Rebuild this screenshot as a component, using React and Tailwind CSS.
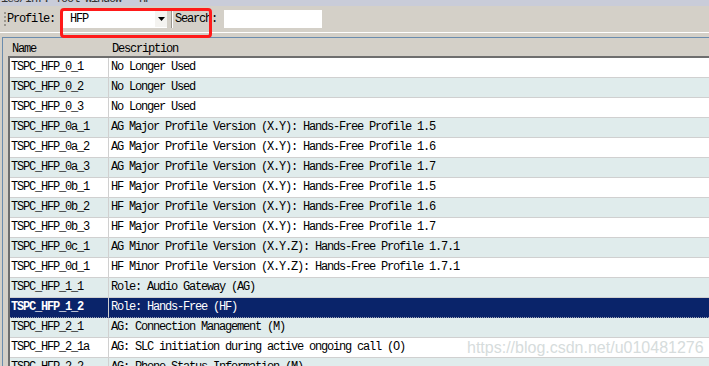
import React from "react";

const rows = [
  ["TSPC_HFP_0_1", "No Longer Used"],
  ["TSPC_HFP_0_2", "No Longer Used"],
  ["TSPC_HFP_0_3", "No Longer Used"],
  ["TSPC_HFP_0a_1", "AG Major Profile Version (X.Y): Hands-Free Profile 1.5"],
  ["TSPC_HFP_0a_2", "AG Major Profile Version (X.Y): Hands-Free Profile 1.6"],
  ["TSPC_HFP_0a_3", "AG Major Profile Version (X.Y): Hands-Free Profile 1.7"],
  ["TSPC_HFP_0b_1", "HF Major Profile Version (X.Y): Hands-Free Profile 1.5"],
  ["TSPC_HFP_0b_2", "HF Major Profile Version (X.Y): Hands-Free Profile 1.6"],
  ["TSPC_HFP_0b_3", "HF Major Profile Version (X.Y): Hands-Free Profile 1.7"],
  ["TSPC_HFP_0c_1", "AG Minor Profile Version (X.Y.Z): Hands-Free Profile 1.7.1"],
  ["TSPC_HFP_0d_1", "HF Minor Profile Version (X.Y.Z): Hands-Free Profile 1.7.1"],
  ["TSPC_HFP_1_1", "Role: Audio Gateway (AG)"],
  ["TSPC_HFP_1_2", "Role: Hands-Free (HF)"],
  ["TSPC_HFP_2_1", "AG: Connection Management (M)"],
  ["TSPC_HFP_2_1a", "AG: SLC initiation during active ongoing call (O)"],
  ["TSPC_HFP_2_2", "AG: Phone Status Information (M)"],
];

const SELECTED = 12;

export default function App() {
  return (
    <div className="relative w-[709px] h-[366px] overflow-hidden bg-[#d4d0c8] text-black font-['Liberation_Mono',monospace] text-[12px] tracking-[-1.2px]">
      {/* title bar, mostly scrolled off */}
      <div className="h-[6px] bg-[#c9ccd9] overflow-hidden">
        <div className="-mt-[7px] pl-[1px] leading-[12px] text-[#333]">ies/Inf. Tool window - HF</div>
      </div>

      {/* toolbar */}
      <div className="h-[26px] flex items-center">
        <div className="ml-[4px] w-[2px] h-[14px] border-l-2 border-dotted border-[#9a978f]" />
        <span className="ml-[1px] w-[56px]">Profile:</span>
        <div className="w-[104px] h-[18px] bg-white flex items-center">
          <span className="pl-[7px] flex-1">HFP</span>
          <div className="w-[12px] h-[16px] flex items-center justify-center bg-[#f4f3f0]">
            <svg width="7" height="4" viewBox="0 0 7 4">
              <path d="M0 0H7L3.5 4Z" fill="#000" />
            </svg>
          </div>
        </div>
        <div className="ml-[4px] w-[2px] h-[18px] border-l border-r border-l-[#9a978f] border-r-white" />
        <span className="ml-[2px] w-[49px]">Search:</span>
        <div className="w-[98px] h-[18px] bg-white" />
      </div>

      <div className="h-px bg-white" />
      <div className="h-[4px]" />

      {/* list panel */}
      <div className="ml-[2px] border-t border-l border-[#6b8cad]">
        <div className="h-[18px] flex items-center pt-[3px]">
          <div className="w-[105px] pl-[9px]">Name</div>
          <div className="pl-[4px]">Description</div>
        </div>
        <div className="ml-[5px] border-t-2 border-l-2 border-[#6e6e6e]">
          {rows.map(([name, desc], i) => {
            const sel = i === SELECTED;
            const bg = sel ? "bg-[#0a246a] text-white" : i % 2 === 0 ? "bg-white" : "bg-[#e0ecec]";
            return (
              <div
                key={name}
                className={`h-[20px] flex items-center pb-[2px] border-b ${sel ? "border-dotted border-[#9aa0b0]" : "border-[#d0d0d0]"} ${bg}`}
              >
                <div className={`w-[98px] pl-[1px] ${sel ? "font-bold" : ""}`}>{name}</div>
                <div className="self-stretch -mb-[2px] w-px bg-[#d0d0d0]" />
                <div className="pl-[2px] whitespace-nowrap">{desc}</div>
              </div>
            );
          })}
        </div>
      </div>

      {/* annotation */}
      <div className="absolute left-[60px] top-[8px] w-[152px] h-[30px] border-[3px] border-[#ff1a1a] rounded-[4px]" />

      {/* watermark */}
      <div className="absolute left-[467px] top-[336px] text-[16px] tracking-normal font-['Liberation_Sans',sans-serif] text-[#d6dcdc]">
        https://blog.csdn.net/u010481276
      </div>
    </div>
  );
}
